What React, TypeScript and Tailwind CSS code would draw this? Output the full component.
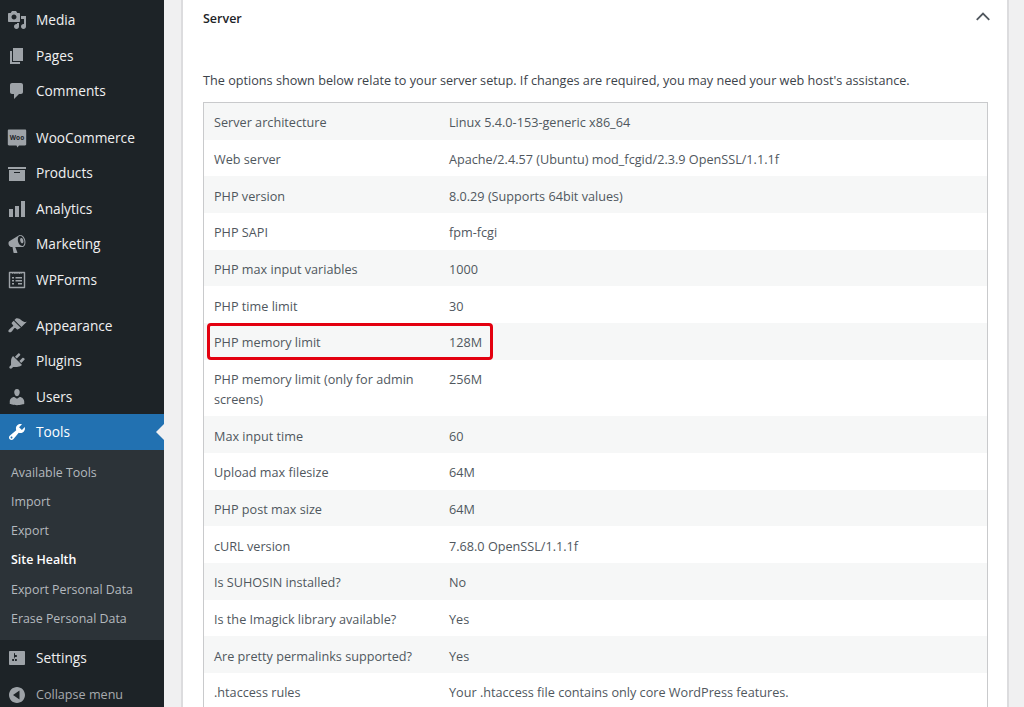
const font = { fontFamily: '"Open Sans", "Noto Sans", sans-serif' };

function Dash({ d, className = 'text-[#9ea3a8]' }: { d: string; className?: string }) {
  return (
    <svg viewBox="0 0 20 20" className={`w-[20px] h-[20px] shrink-0 ${className}`} fill="currentColor">
      <path d={d} />
    </svg>
  );
}

const icons = {
  media: 'M13 11V4c0-.55-.45-1-1-1h-1.67L9 1H5L3.67 3H2c-.55 0-1 .45-1 1v7c0 .55.45 1 1 1h10c.55 0 1-.45 1-1zM7 4.5c1.38 0 2.5 1.12 2.5 2.5S8.38 9.5 7 9.5 4.5 8.38 4.5 7 5.62 4.5 7 4.5zM14 6h5v10.5c0 1.38-1.12 2.5-2.5 2.5S14 17.88 14 16.5s1.12-2.5 2.5-2.5c.17 0 .34.02.5.05V9h-3V6zm-4 8.05V13h2v3.5c0 1.38-1.12 2.5-2.5 2.5S7 17.88 7 16.5 8.12 14 9.5 14c.17 0 .34.02.5.05z',
  pages: 'M6 15V2h10v13H6zm-1 1h8v2H3V5h2v11z',
  comments: 'M5 2h9c1.1 0 2 .9 2 2v7c0 1.1-.9 2-2 2h-2l-5 5v-5H5c-1.1 0-2-.9-2-2V4c0-1.1.9-2 2-2z',
  products: 'M19 4v2H1V4h18zM2 7h16v11H2V7zm11 3V9H7v1h6z',
  analytics: 'M18 18V2h-4v16h4zm-6 0V7H8v11h4zm-6 0v-8H2v8h4z',
  marketing: 'M18.15 5.94c.46 1.62.38 3.22-.02 4.48-.42 1.28-1.26 2.18-2.3 2.48-.16.06-.26.06-.4.06-.06.02-.12.02-.18.02-.06.02-.14.02-.22.02h-6.8l2.22 5.5c.02.14-.06.26-.14.34-.08.1-.24.16-.34.16H6.95c-.1 0-.26-.06-.34-.16-.08-.08-.16-.2-.14-.34l-1-5.5H4.25l-.02-.02c-.5.06-1.08-.18-1.54-.62s-.88-1.08-1.06-1.88c-.24-.8-.2-1.56-.02-2.2.18-.62.58-1.08 1.06-1.3l.02-.02 9-5.4c.1-.06.18-.1.24-.16.06-.04.14-.08.24-.12.16-.08.28-.12.5-.18 1.04-.3 2.24.1 3.22 1 .98.88 1.84 2.24 2.26 3.86zm-2.58 5.98h-.02c.4-.1.74-.34 1.04-.7.58-.7.86-1.76.86-3.04-.02-.64-.12-1.3-.3-2-.42-1.44-1.14-2.64-1.96-3.4-.42-.36-.84-.64-1.26-.8-.44-.14-.86-.2-1.22-.08-.4.1-.74.34-1.04.7-.58.7-.86 1.76-.86 3.04 0 .64.12 1.3.3 2 .42 1.44 1.14 2.64 1.96 3.4.42.36.84.64 1.26.8.44.14.86.2 1.24.08zm-1.42-7.98c.34-.08.66.06.96.32.5.42.9 1.14 1.14 1.98.12.44.18.86.18 1.26 0 .3-.04.58-.12.82-.16.5-.5.86-.92.96-.34.08-.66-.06-.96-.32-.5-.42-.9-1.14-1.14-1.98-.12-.44-.18-.86-.18-1.26 0-.3.04-.58.12-.82.16-.5.5-.86.92-.96z',
  appearance: 'M14.48 11.06L7.41 3.99l1.5-1.5c.5-.56 2.3-.47 3.51.32 1.21.8 1.43 1.28 2.91 2.1 1.18.64 2.45 1.26 4.45.85zm-.71.71L6.7 4.7 4.93 6.47c-.39.39-.39 1.02 0 1.41l1.06 1.06c.39.39.39 1.03 0 1.42-.6.6-1.43 1.11-2.21 1.69-.35.26-.7.53-1.01.84C1.43 13.71.96 15.12 1.75 15.9c.78.79 2.19.32 3.01-.51.31-.31.58-.66.84-1.01.58-.78 1.09-1.61 1.69-2.21.39-.39 1.02-.39 1.41 0l1.06 1.06c.39.39 1.02.39 1.41 0z',
  plugins: 'M13.11 4.36L9.87 7.6 8 5.73l3.24-3.24c.35-.34 1.05-.2 1.56.32.52.51.66 1.21.31 1.55zm-8 1.77l.91-1.12 9.01 9.01-1.19.84c-.71.71-2.63 1.16-3.82 1.16H6.14L4.9 17.26c-.59.59-1.54.59-2.12 0-.59-.58-.59-1.53 0-2.12l1.24-1.24v-3.88c0-1.13.4-3.19 1.09-3.89zm7.26 3.97l3.24-3.24c.34-.35 1.04-.21 1.55.31.52.51.66 1.21.31 1.55l-3.24 3.25z',
  users: 'M10 9.25c-2.27 0-2.73-3.44-2.73-3.44C7 4.02 7.82 2 9.97 2c2.16 0 2.98 2.02 2.71 3.81 0 0-.41 3.44-2.68 3.44zm0 2.57L12.72 10c2.39 0 4.52 2.33 4.52 4.53v2.49s-3.65 1.13-7.24 1.13c-3.65 0-7.24-1.13-7.24-1.13v-2.49c0-2.25 1.94-4.48 4.47-4.48z',
  tools: 'M16.68 9.77c-1.34 1.34-3.3 1.67-4.95.99l-5.41 6.52c-.99.99-2.59.99-3.58 0s-.99-2.59 0-3.57l6.52-5.42c-.68-1.65-.35-3.61.99-4.95 1.28-1.28 3.12-1.62 4.72-1.06l-2.89 2.89 2.82 2.82 2.86-2.87c.53 1.58.18 3.39-1.08 4.65zM3.81 16.21c.4.39 1.04.39 1.43 0 .4-.4.4-1.04 0-1.43-.39-.4-1.03-.4-1.43 0-.39.39-.39 1.03 0 1.43z',
  settings: 'M18 16V4c0-.55-.45-1-1-1H3c-.55 0-1 .45-1 1v12c0 .55.45 1 1 1h14c.55 0 1-.45 1-1zM8 11h1c.55 0 1 .45 1 1s-.45 1-1 1H8v1.5c0 .28-.22.5-.5.5s-.5-.22-.5-.5V13H6c-.55 0-1-.45-1-1s.45-1 1-1h1V5.5c0-.28.22-.5.5-.5s.5.22.5.5V7h1c.55 0 1 .45 1 1s-.45 1-1 1h-1v5.5c0 .28-.22.5-.5.5s-.5-.22-.5-.5V9z',
  collapse: 'M18 10c0-4.42-3.58-8-8-8s-8 3.58-8 8 3.58 8 8 8 8-3.58 8-8zm-5.5-4.5v9L6 10z',
};

function WooIcon() {
  return (
    <svg viewBox="0 0 20 20" className="w-[20px] h-[20px] shrink-0">
      <path d="M2 1.500h16c.8 0 1.200.5 1.200 1.200v13.600c0 .7-.4 1.200-1.200 1.200h-6l-1.600 2-.9-2H2c-.8 0-1.200-.5-1.200-1.200V2.700c0-.7.4-1.200 1.200-1.200z" fill="#9ea3a8" />
      <text x="10" y="11.800" textAnchor="middle" fontSize="6.500" fontWeight="700" fill="#1d2327" fontFamily="Open Sans">Woo</text>
    </svg>
  );
}

function FormsIcon() {
  return (
    <svg viewBox="0 0 20 20" className="w-[20px] h-[20px] shrink-0" fill="none">
      <path d="M2.500 2.500h15v15h-15z" stroke="#9ea3a8" strokeWidth="1.400" strokeLinejoin="round" />
      <path d="M5 2v2l1.500-1 1.500 1 1-1 1 1 1-1 1.500 1 1.500-1 1 1V2z" fill="#9ea3a8" />
      <path d="M5 7h2v1.500H5zM8.500 7H15v1.500H8.500zM5 10h2v1.500H5zM8.500 10H15v1.500H8.500zM5 13h2v1.500H5zM11 13h4v1.500h-4z" fill="#9ea3a8" />
    </svg>
  );
}

function MenuItem({ icon, label, active }: { icon: React.ReactNode; label: string; active?: boolean }) {
  return (
    <div className={`relative flex items-center h-[35.500px] pl-[7px] text-[13.700px] ${active ? 'bg-[#2271b1] text-white' : 'text-[#f0f0f1]'}`}>
      <span className="w-[29px] shrink-0 flex">{icon}</span>
      <span className="pt-[1px]">{label}</span>
      {active && (
        <span className="absolute right-0 top-1/2 -translate-y-1/2 border-y-[8px] border-y-transparent border-r-[8px] border-r-[#f0f0f1]" />
      )}
    </div>
  );
}

const submenu = ['Available Tools', 'Import', 'Export', 'Site Health', 'Export Personal Data', 'Erase Personal Data'];

function Sidebar() {
  return (
    <aside className="w-[164px] shrink-0 bg-[#1d2327] pt-[2.300px]">
      <MenuItem icon={<Dash d={icons.media} />} label="Media" />
      <MenuItem icon={<Dash d={icons.pages} />} label="Pages" />
      <MenuItem icon={<Dash d={icons.comments} />} label="Comments" />
      <div className="h-[11px]" />
      <MenuItem icon={<WooIcon />} label="WooCommerce" />
      <MenuItem icon={<Dash d={icons.products} />} label="Products" />
      <MenuItem icon={<Dash d={icons.analytics} />} label="Analytics" />
      <MenuItem icon={<Dash d={icons.marketing} />} label="Marketing" />
      <MenuItem icon={<FormsIcon />} label="WPForms" />
      <div className="h-[10.500px]" />
      <MenuItem icon={<Dash d={icons.appearance} />} label="Appearance" />
      <MenuItem icon={<Dash d={icons.plugins} />} label="Plugins" />
      <MenuItem icon={<Dash d={icons.users} />} label="Users" />
      <MenuItem icon={<Dash d={icons.tools} className="text-white" />} label="Tools" active />
      <div className="bg-[#2c3338] pt-[8.700px] pb-[6.500px]">
        {submenu.map((item) => (
          <div
            key={item}
            className={`h-[29.200px] flex items-center pl-[11px] text-[12.400px] ${item === 'Site Health' ? 'font-semibold text-white' : 'text-[#b4b9be]'}`}
          >
            {item}
          </div>
        ))}
      </div>
      <MenuItem icon={<Dash d={icons.settings} />} label="Settings" />
      <div className="flex items-center h-[39px] pl-[7px] text-[12.600px] text-[#a7aaad]">
        <span className="w-[29px] shrink-0 flex"><Dash d={icons.collapse} /></span>
        <span>Collapse menu</span>
      </div>
    </aside>
  );
}

const rows: [string, string][] = [
  ['Server architecture', 'Linux 5.4.0-153-generic x86_64'],
  ['Web server', 'Apache/2.4.57 (Ubuntu) mod_fcgid/2.3.9 OpenSSL/1.1.1f'],
  ['PHP version', '8.0.29 (Supports 64bit values)'],
  ['PHP SAPI', 'fpm-fcgi'],
  ['PHP max input variables', '1000'],
  ['PHP time limit', '30'],
  ['PHP memory limit', '128M'],
  ['PHP memory limit (only for admin screens)', '256M'],
  ['Max input time', '60'],
  ['Upload max filesize', '64M'],
  ['PHP post max size', '64M'],
  ['cURL version', '7.68.0 OpenSSL/1.1.1f'],
  ['Is SUHOSIN installed?', 'No'],
  ['Is the Imagick library available?', 'Yes'],
  ['Are pretty permalinks supported?', 'Yes'],
  ['.htaccess rules', 'Your .htaccess file contains only core WordPress features.'],
];

function Row({ label, value, index }: { label: string; value: string; index: number }) {
  const highlighted = label === 'PHP memory limit';
  return (
    <div className={`relative flex pt-[9.450px] pb-[7.220px] leading-[20px] ${index % 2 === 0 ? 'bg-[#f6f7f7]' : 'bg-white'}`}>
      <div className="w-[245px] shrink-0 pl-[10px] pr-[10px]">{label}</div>
      <div>{value}</div>
      {highlighted && (
        <div className="absolute left-[3px] top-[0.500px] w-[286px] h-[37px] border-[3px] border-[#e3000f] rounded-[4px]" />
      )}
    </div>
  );
}

export default function App() {
  return (
    <div className="flex h-[707px] w-[1024px] overflow-hidden bg-[#f0f0f1]" style={font}>
      <Sidebar />
      <main className="flex-1 pl-[17px] pr-[15px]">
        <section className="h-full bg-white border-x-2 border-[#dcdcde] pl-[20px] pr-[19px] text-[12.660px] text-[#50575e]">
          <div className="flex items-center justify-between h-[38px]">
            <h2 className="font-semibold text-[#1d2327] text-[12.500px]">Server</h2>
            <svg viewBox="0 0 24 24" className="w-[20px] h-[20px] mb-[4px] mr-[-5px] text-[#50575e]" fill="none" stroke="currentColor" strokeWidth="2.200">
              <path d="M4.500 15.500 12 8l7.500 7.500" />
            </svg>
          </div>
          <p className="mt-[32px] text-[#3c434a] leading-[20px]">
            The options shown below relate to your server setup. If changes are required, you may need your web host's assistance.
          </p>
          <div className="mt-[12px] border border-[#c9cacc]">
            {rows.map(([label, value], i) => (
              <Row key={label} label={label} value={value} index={i} />
            ))}
          </div>
        </section>
      </main>
    </div>
  );
}
